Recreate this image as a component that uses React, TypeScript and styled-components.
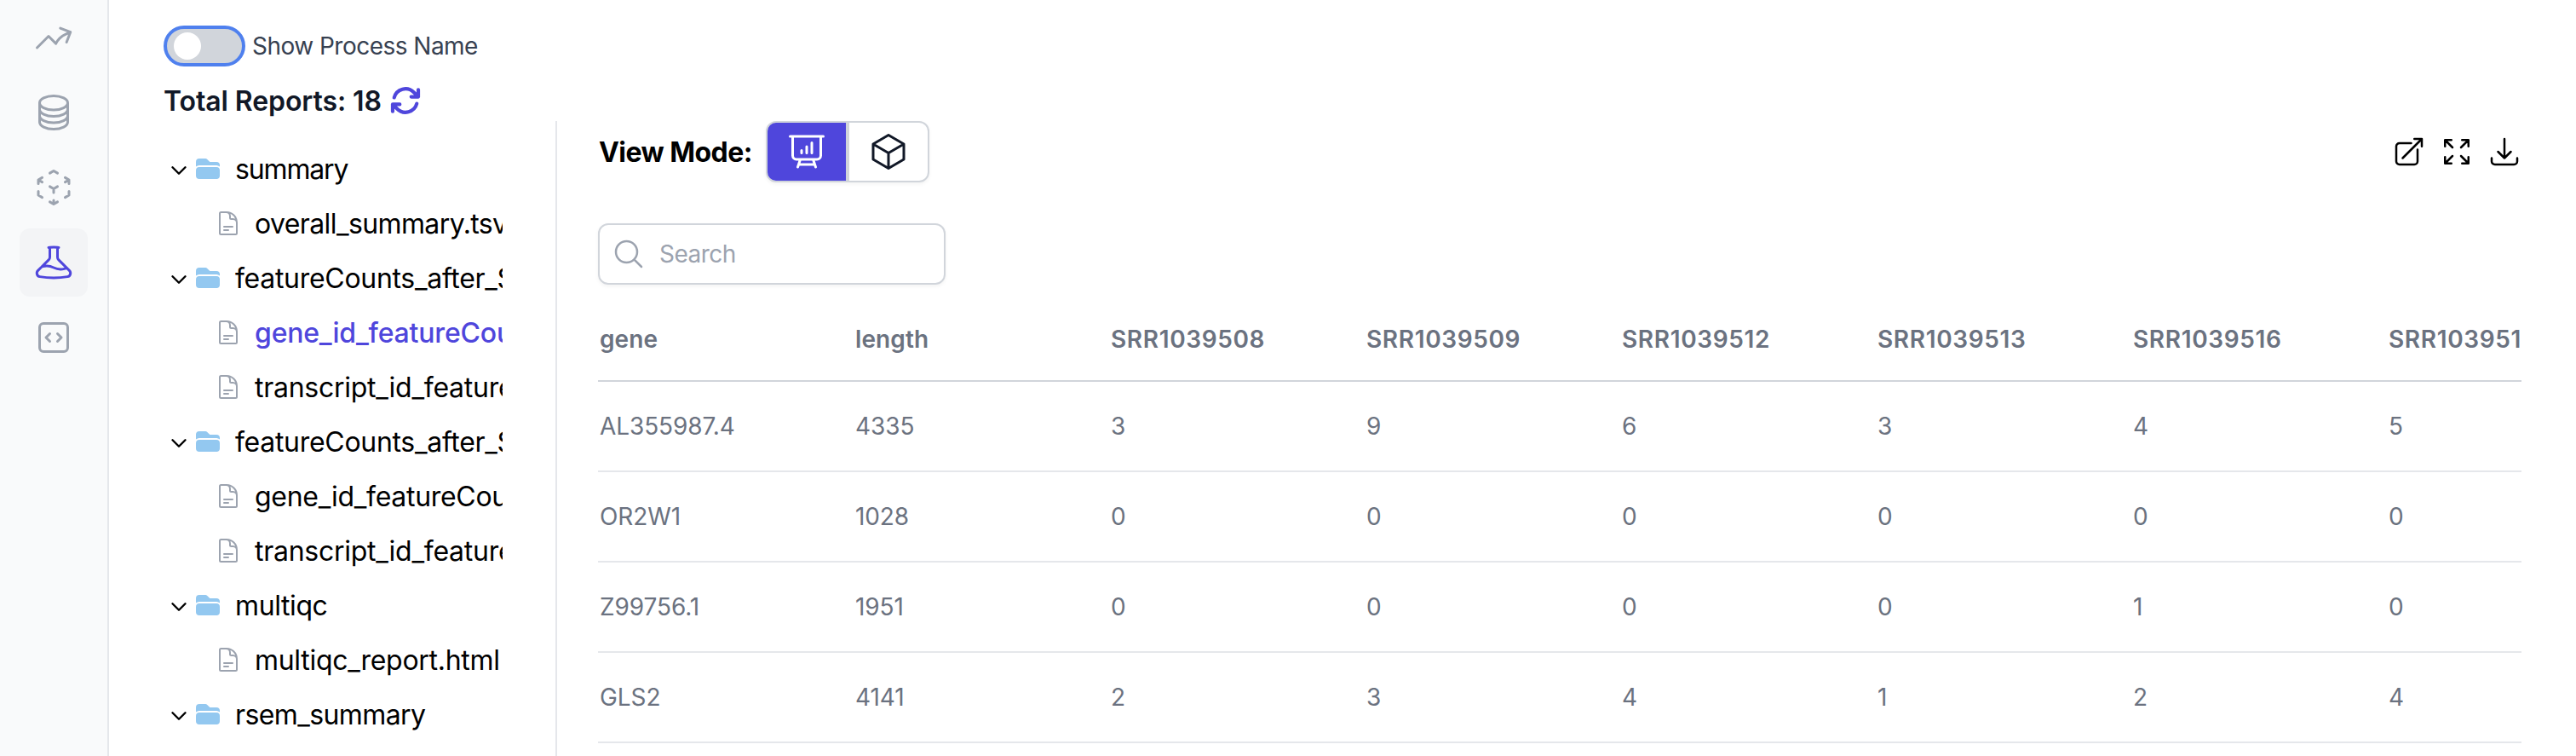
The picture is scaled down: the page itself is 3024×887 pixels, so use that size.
import React from "react";
import styled, { createGlobalStyle, css } from "styled-components";
import {
  HiOutlineArrowTrendingUp,
  HiOutlineCircleStack,
  HiOutlineCubeTransparent,
  HiOutlineBeaker,
  HiOutlineCodeBracketSquare,
  HiOutlineArrowPath,
  HiOutlineChevronDown,
  HiFolder,
  HiOutlineDocumentText,
  HiOutlinePresentationChartBar,
  HiOutlineCube,
  HiOutlineArrowTopRightOnSquare,
  HiOutlineArrowsPointingOut,
  HiOutlineArrowDownTray,
  HiOutlineMagnifyingGlass,
} from "react-icons/hi2";

const GlobalStyle = createGlobalStyle`
  *, *::before, *::after { box-sizing: border-box; }
  body {
    margin: 0;
    background: #fff;
    color: #000;
    font-family: Inter, "Liberation Sans", sans-serif;
    font-size: 32px;
  }
  svg { display: block; flex: none; }
  button, input { font: inherit; color: inherit; }
`;

const Page = styled.div`
  display: flex;
  height: 887px;
  overflow: hidden;
`;

const Sidebar = styled.nav`
  flex: none;
  width: 128px;
  padding: 4px 0 0 23px;
  display: flex;
  flex-direction: column;
  gap: 8px;
  background: #f9fafb;
  border-right: 2px solid #e5e7eb;
`;

const NavButton = styled.button<{ $active?: boolean }>`
  flex: none;
  display: grid;
  place-items: center;
  width: 80px;
  height: 80px;
  padding: 0;
  border: 0;
  border-radius: 12px;
  background: ${(p) => (p.$active ? "#f3f4f6" : "transparent")};
  color: ${(p) => (p.$active ? "#4f46dc" : "#9ca3af")};
  font-size: 48px;
`;

const Main = styled.main`
  flex: 1;
  min-width: 0;
  display: flex;
  flex-direction: column;
  padding: 30px 64px 0;
`;

const ToggleRow = styled.div`
  display: flex;
  align-items: center;
  gap: 8px;
  height: 48px;
`;

const Toggle = styled.button`
  width: 96px;
  height: 48px;
  padding: 4px 8px;
  border: 4px solid #4f80ee;
  border-radius: 24px;
  background: #d1d5db;
`;

const Knob = styled.span`
  display: block;
  width: 32px;
  height: 32px;
  border-radius: 50%;
  background: #fff;
`;

const ToggleLabel = styled.span`
  font-size: 28px;
  letter-spacing: -0.52px;
  color: #374151;
`;

const ReportsTitle = styled.h2`
  display: flex;
  align-items: center;
  gap: 8px;
  height: 40px;
  margin: 20px 0 0;
  font-size: 32px;
  font-weight: 600;
  letter-spacing: -0.09px;
  color: #111827;
`;

const RefreshIcon = styled(HiOutlineArrowPath)`
  width: 40px;
  height: 40px;
  stroke-width: 2.5;
  color: #4f46dc;
`;

const Body = styled.div`
  flex: 1;
  min-height: 0;
  display: flex;
  margin-top: 4px;
`;

const Tree = styled.div`
  flex: none;
  width: 398px;
  padding-top: 24px;
  overflow: hidden;
`;

const TreeRow = styled.div<{ $file?: boolean; $selected?: boolean }>`
  display: flex;
  align-items: center;
  height: 64px;
  padding-left: ${(p) => (p.$file ? 60 : 6)}px;
  white-space: nowrap;
  ${(p) =>
    p.$selected &&
    css`
      color: #4f46dc;
      font-weight: 500;
    `}
`;

const Chevron = styled(HiOutlineChevronDown)`
  width: 24px;
  height: 24px;
  margin: 3px 6px 0 0;
  stroke-width: 2.4;
`;

const FolderIcon = styled(HiFolder)`
  width: 32px;
  height: 32px;
  margin-right: 16px;
  color: #93c8f0;
`;

const FileIcon = styled(HiOutlineDocumentText)`
  width: 32px;
  height: 32px;
  margin-right: 15px;
  color: #9ca3af;
`;

const TreeLabel = styled.span<{ $tracking: number }>`
  letter-spacing: ${(p) => p.$tracking}px;
`;

const Viewer = styled.section`
  flex: 1;
  min-width: 0;
  margin-left: 62px;
  padding-left: 48px;
  border-left: 2px solid #e5e7eb;
`;

const Toolbar = styled.div`
  display: flex;
  align-items: center;
  height: 72px;
`;

const ViewLabel = styled.span`
  width: 197px;
  padding-left: 1px;
  font-weight: 700;
  letter-spacing: -0.55px;
  white-space: nowrap;
`;

const ModeGroup = styled.div`
  display: flex;
  border-radius: 12px;
  box-shadow: 0 2px 4px rgba(0, 0, 0, 0.05);
`;

const ModeButton = styled.button<{ $active?: boolean }>`
  display: grid;
  place-items: center;
  width: 96px;
  height: 72px;
  padding: 0;
  border: 2px solid #d1d5db;
  border-radius: ${(p) => (p.$active ? "12px 0 0 12px" : "0 12px 12px 0")};
  background: ${(p) => (p.$active ? "#4f46dc" : "#fff")};
  color: ${(p) => (p.$active ? "#fff" : "#111827")};
  font-size: 48px;
`;

const Actions = styled.div`
  display: flex;
  gap: 16px;
  margin-left: auto;
  font-size: 40px;
`;

const SearchBox = styled.label`
  display: flex;
  align-items: center;
  gap: 16px;
  width: 408px;
  height: 72px;
  margin-top: 48px;
  padding-left: 14px;
  border: 2px solid #d1d5db;
  border-radius: 12px;
  box-shadow: 0 2px 4px rgba(0, 0, 0, 0.05);
  color: #9ca3af;
`;

const SearchIcon = styled(HiOutlineMagnifyingGlass)`
  width: 40px;
  height: 40px;
`;

const SearchInput = styled.input`
  width: 300px;
  padding: 0;
  border: 0;
  outline: 0;
  background: transparent;
  font-size: 28px;
  letter-spacing: -0.5px;
  &::placeholder {
    color: #9ca3af;
    opacity: 1;
  }
`;

const TableScroll = styled.div`
  margin-top: 16px;
  overflow: hidden;
`;

const Table = styled.table`
  width: 2400px;
  table-layout: fixed;
  border-collapse: separate;
  border-spacing: 0;
  font-size: 28px;
  color: #6b7280;
`;

const HeadCell = styled.th<{ $tracking: number }>`
  width: 300px;
  height: 98px;
  padding: 0 2px;
  border-bottom: 2px solid #d1d5db;
  text-align: left;
  font-weight: 600;
  letter-spacing: ${(p) => p.$tracking}px;
`;

const Cell = styled.td`
  height: 106px;
  padding: 0 2px;
  border-bottom: 2px solid #e5e7eb;
  letter-spacing: -0.1px;
`;

type TreeNode = { label: string; tracking: number; file?: boolean; selected?: boolean };

const nodes: TreeNode[] = [
  { label: "summary", tracking: -1.15 },
  { label: "overall_summary.tsv", tracking: -0.6, file: true },
  { label: "featureCounts_after_STAR", tracking: -0.3 },
  { label: "gene_id_featureCounts.tsv", tracking: -0.2, file: true, selected: true },
  { label: "transcript_id_featureCounts.tsv", tracking: -0.27, file: true },
  { label: "featureCounts_after_STAR", tracking: -0.3 },
  { label: "gene_id_featureCounts.tsv", tracking: -0.3, file: true },
  { label: "transcript_id_featureCounts.tsv", tracking: -0.27, file: true },
  { label: "multiqc", tracking: -0.4 },
  { label: "multiqc_report.html", tracking: -0.3, file: true },
  { label: "rsem_summary", tracking: -0.6 },
];

const columns = [
  "gene",
  "length",
  "SRR1039508",
  "SRR1039509",
  "SRR1039512",
  "SRR1039513",
  "SRR1039516",
  "SRR1039517",
];

const rows = [
  ["AL355987.4", "4335", "3", "9", "6", "3", "4", "5"],
  ["OR2W1", "1028", "0", "0", "0", "0", "0", "0"],
  ["Z99756.1", "1951", "0", "0", "0", "0", "1", "0"],
  ["GLS2", "4141", "2", "3", "4", "1", "2", "4"],
];

export default function App() {
  return (
    <>
      <GlobalStyle />
      <Page>
        <Sidebar>
          <NavButton><HiOutlineArrowTrendingUp /></NavButton>
          <NavButton><HiOutlineCircleStack /></NavButton>
          <NavButton><HiOutlineCubeTransparent /></NavButton>
          <NavButton $active><HiOutlineBeaker /></NavButton>
          <NavButton><HiOutlineCodeBracketSquare /></NavButton>
        </Sidebar>
        <Main>
          <ToggleRow>
            <Toggle><Knob /></Toggle>
            <ToggleLabel>Show Process Name</ToggleLabel>
          </ToggleRow>
          <ReportsTitle>
            Total Reports: 18
            <RefreshIcon />
          </ReportsTitle>
          <Body>
            <Tree>
              {nodes.map((n, i) => (
                <TreeRow key={i} $file={n.file} $selected={n.selected}>
                  {n.file ? <FileIcon /> : <><Chevron /><FolderIcon /></>}
                  <TreeLabel $tracking={n.tracking}>{n.label}</TreeLabel>
                </TreeRow>
              ))}
            </Tree>
            <Viewer>
              <Toolbar>
                <ViewLabel>View Mode:</ViewLabel>
                <ModeGroup>
                  <ModeButton $active><HiOutlinePresentationChartBar /></ModeButton>
                  <ModeButton><HiOutlineCube /></ModeButton>
                </ModeGroup>
                <Actions>
                  <HiOutlineArrowTopRightOnSquare />
                  <HiOutlineArrowsPointingOut />
                  <HiOutlineArrowDownTray />
                </Actions>
              </Toolbar>
              <SearchBox>
                <SearchIcon />
                <SearchInput placeholder="Search" />
              </SearchBox>
              <TableScroll>
                <Table>
                  <thead>
                    <tr>
                      {columns.map((c) => (
                        <HeadCell key={c} $tracking={c.startsWith("SRR") ? 0.64 : 0.1}>{c}</HeadCell>
                      ))}
                    </tr>
                  </thead>
                  <tbody>
                    {rows.map((r) => (
                      <tr key={r[0]}>
                        {r.map((v, i) => <Cell key={i}>{v}</Cell>)}
                      </tr>
                    ))}
                  </tbody>
                </Table>
              </TableScroll>
            </Viewer>
          </Body>
        </Main>
      </Page>
    </>
  );
}
